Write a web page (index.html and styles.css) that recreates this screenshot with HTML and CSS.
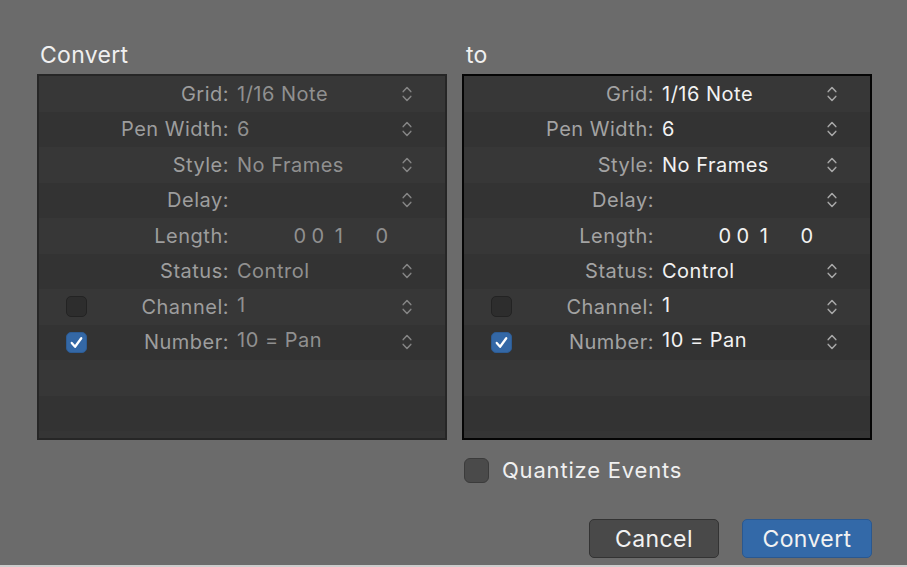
FILE: index.html
```html
<!DOCTYPE html>
<html lang="en">
<head>
    <meta charset="UTF-8">
    <meta name="viewport" content="width=device-width, initial-scale=1.0">
    <title>Convert</title>
    <link rel="stylesheet" href="styles.css">
</head>
<body>

<svg width="0" height="0" class="defs">
    <symbol id="updown" viewBox="0 0 10 18">
        <path d="M1.2 6.6 L5 2.6 L8.8 6.6 M1.2 11.4 L5 15.4 L8.8 11.4" fill="none" stroke="currentColor" stroke-width="1.5" stroke-linecap="round" stroke-linejoin="round"/>
    </symbol>
    <symbol id="tick" viewBox="0 0 20 20">
        <path d="M5 10.5 L8.5 14.5 L15 5.5" fill="none" stroke="#fff" stroke-width="2.4" stroke-linecap="round" stroke-linejoin="round"/>
    </symbol>
</svg>

<div class="dialog">
    <div class="columns">
        <div class="column">
            <div class="title">Convert</div>
            <div class="panel dimmed">
                <div class="row"><span></span><span class="label">Grid:</span><span class="value">1/16 Note</span><svg class="stepper"><use href="#updown"/></svg></div>
                <div class="row"><span></span><span class="label">Pen Width:</span><span class="value">6</span><svg class="stepper"><use href="#updown"/></svg></div>
                <div class="row"><span></span><span class="label">Style:</span><span class="value">No Frames</span><svg class="stepper"><use href="#updown"/></svg></div>
                <div class="row"><span></span><span class="label">Delay:</span><span class="value"></span><svg class="stepper"><use href="#updown"/></svg></div>
                <div class="row"><span></span><span class="label">Length:</span><span class="value length"><span>0</span><span>0</span><span>1</span><span>0</span></span><span></span></div>
                <div class="row"><span></span><span class="label">Status:</span><span class="value">Control</span><svg class="stepper"><use href="#updown"/></svg></div>
                <div class="row"><span class="check"></span><span class="label">Channel:</span><span class="value raised">1</span><svg class="stepper"><use href="#updown"/></svg></div>
                <div class="row"><span class="check on"><svg><use href="#tick"/></svg></span><span class="label">Number:</span><span class="value raised">10 = Pan</span><svg class="stepper"><use href="#updown"/></svg></div>
                <div class="row"></div>
                <div class="row"></div>
            </div>
        </div>

        <div class="column">
            <div class="title">to</div>
            <div class="panel focused">
                <div class="row"><span></span><span class="label">Grid:</span><span class="value">1/16 Note</span><svg class="stepper"><use href="#updown"/></svg></div>
                <div class="row"><span></span><span class="label">Pen Width:</span><span class="value">6</span><svg class="stepper"><use href="#updown"/></svg></div>
                <div class="row"><span></span><span class="label">Style:</span><span class="value">No Frames</span><svg class="stepper"><use href="#updown"/></svg></div>
                <div class="row"><span></span><span class="label">Delay:</span><span class="value"></span><svg class="stepper"><use href="#updown"/></svg></div>
                <div class="row"><span></span><span class="label">Length:</span><span class="value length"><span>0</span><span>0</span><span>1</span><span>0</span></span><span></span></div>
                <div class="row"><span></span><span class="label">Status:</span><span class="value">Control</span><svg class="stepper"><use href="#updown"/></svg></div>
                <div class="row"><span class="check"></span><span class="label">Channel:</span><span class="value raised">1</span><svg class="stepper"><use href="#updown"/></svg></div>
                <div class="row"><span class="check on"><svg><use href="#tick"/></svg></span><span class="label">Number:</span><span class="value raised">10 = Pan</span><svg class="stepper"><use href="#updown"/></svg></div>
                <div class="row"></div>
                <div class="row"></div>
            </div>
            <label class="option"><span class="box"></span>Quantize Events</label>
        </div>
    </div>

    <div class="buttons">
        <button class="btn">Cancel</button>
        <button class="btn primary">Convert</button>
    </div>
</div>

</body>
</html>
```

FILE: styles.css
```css
html, body {
    margin: 0;
    height: 100%;
}
body {
    background-color: #6b6b6b;
    font-family: Inter, "Noto Sans", sans-serif;
    color: #f0f0f0;
    overflow: hidden;
}
.defs {
    position: absolute;
}
.dialog {
    box-sizing: border-box;
    height: 567px;
    padding: 40px 35px 0 37px;
    border-bottom: 2px solid #cdcdcd;
}
.columns {
    display: flex;
    gap: 15px;
}
.column {
    width: 410px;
}
.title {
    font-size: 23px;
    letter-spacing: 0.3px;
    line-height: 30px;
    height: 34px;
    padding-left: 3px;
}
.column + .column .title {
    padding-left: 4px;
}

/* event list panels */
.panel {
    box-sizing: border-box;
    height: 366px;
    border: 2px solid #262626;
    background-color: #353535;
    overflow: hidden;
}
.panel.focused {
    border-color: #050505;
}
.row {
    display: grid;
    grid-template-columns: 20px 142px 169px 20px;
    align-items: center;
    height: 35.5px;
    padding-left: 27px;
    font-size: 20px;
    letter-spacing: 0.5px;
}
.row:nth-child(odd) {
    background-color: #373737;
}
.row:nth-child(even) {
    background-color: #333333;
}
.label {
    text-align: right;
    color: #a3a3a3;
    margin-right: -1px;
}
.value {
    padding-left: 9px;
    white-space: nowrap;
}
.value.raised {
    margin-top: -4px;
}
.dimmed .label {
    color: #9d9d9d;
}
.dimmed .value {
    color: #909090;
}
.focused .value {
    color: #f2f2f2;
}
.length {
    display: grid;
    grid-template-columns: 18px 18px 24px 62px;
    padding-left: 63px;
    text-align: center;
}
.stepper {
    width: 10px;
    height: 18px;
    justify-self: center;
    color: #858585;
}
.focused .stepper {
    color: #a8a8a8;
}
.check {
    box-sizing: border-box;
    width: 21px;
    height: 21px;
    border-radius: 5px;
    background-color: #2d2d2d;
    border: 1px solid #232323;
}
.check.on {
    background-color: #3468a6;
    border-color: #2d5c94;
}
.check svg {
    width: 19px;
    height: 19px;
    display: block;
}

.option {
    display: flex;
    align-items: center;
    gap: 13px;
    margin-top: 17px;
    padding-left: 2px;
    font-size: 22px;
    letter-spacing: 0.8px;
    color: #f0f0f0;
}
.box {
    box-sizing: border-box;
    width: 25px;
    height: 25px;
    border-radius: 6px;
    background-color: #4a4a4a;
    border: 1px solid #3b3b3b;
}

.buttons {
    display: flex;
    justify-content: flex-end;
    gap: 23px;
    margin-top: 36px;
}
.btn {
    box-sizing: border-box;
    width: 130px;
    height: 39px;
    font-family: inherit;
    font-size: 23px;
    letter-spacing: 0.4px;
    color: #f2f2f2;
    background-color: #494949;
    border: 1px solid #333333;
    border-radius: 5px;
    padding: 0;
}
.btn.primary {
    background-color: #3369a8;
    border-color: #2a5890;
}
```
